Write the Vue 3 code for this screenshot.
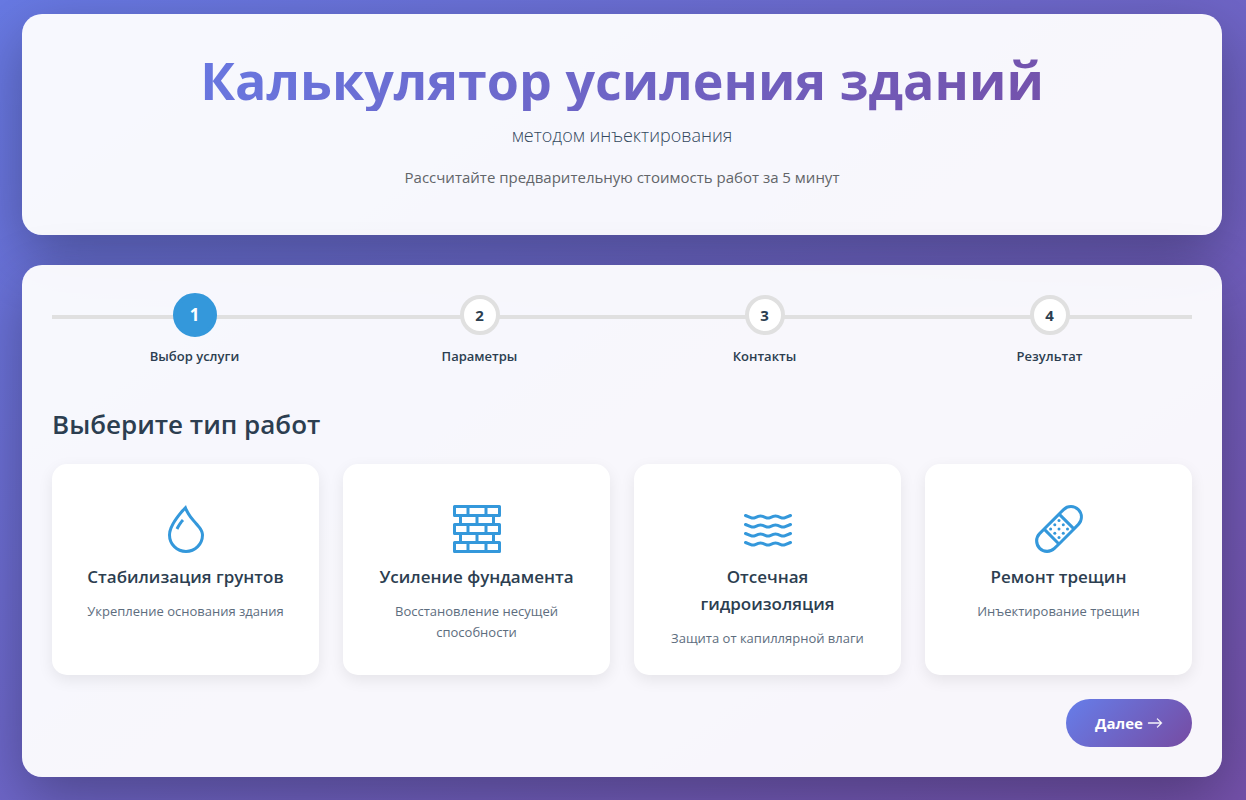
<script setup>
import { ref } from 'vue'

const steps = ['Выбор услуги', 'Параметры', 'Контакты', 'Результат']
const current = ref(0)

const wave =
  'a.5.5 0 0 1 .65-.278l1.757.703a1.5 1.5 0 0 0 1.114 0l1.014-.406a2.5 2.5 0 0 1 1.857 0l1.015.406a1.5 1.5 0 0 0 1.114 0l1.014-.406a2.5 2.5 0 0 1 1.857 0l1.015.406a1.5 1.5 0 0 0 1.114 0l1.757-.703a.5.5 0 1 1 .372.928l-1.758.703a2.5 2.5 0 0 1-1.857 0l-1.014-.406a1.5 1.5 0 0 0-1.114 0l-1.015.406a2.5 2.5 0 0 1-1.857 0l-1.014-.406a1.5 1.5 0 0 0-1.114 0l-1.015.406a2.5 2.5 0 0 1-1.857 0l-1.757-.703a.5.5 0 0 1-.278-.65z'

const services = [
  {
    title: 'Стабилизация грунтов',
    text: 'Укрепление основания здания',
    paths: [
      'M7.21.8C7.69.295 8 0 8 0q.164.544.371 1.038c.812 1.946 2.073 3.35 3.197 4.6C12.878 7.096 14 8.345 14 10a6 6 0 0 1-12 0C2 6.668 5.58 2.517 7.21.8m.413 1.021A31 31 0 0 0 5.794 3.99c-.726.95-1.436 2.008-1.96 3.07C3.304 8.133 3 9.138 3 10a5 5 0 0 0 10 0c0-1.201-.796-2.157-2.181-3.7l-.03-.032C9.75 5.11 8.5 3.72 7.623 1.82z',
      'M4.553 7.776c.82-1.641 1.717-2.753 2.093-3.13l.708.708c-.29.29-1.128 1.311-1.907 2.87z'
    ],
    dots: []
  },
  {
    title: 'Усиление фундамента',
    text: 'Восстановление несущей способности',
    paths: [
      'M0 .5A.5.5 0 0 1 .5 0h15a.5.5 0 0 1 .5.5v3a.5.5 0 0 1-.5.5H14v2h1.5a.5.5 0 0 1 .5.5v3a.5.5 0 0 1-.5.5H14v2h1.5a.5.5 0 0 1 .5.5v3a.5.5 0 0 1-.5.5H.5a.5.5 0 0 1-.5-.5v-3a.5.5 0 0 1 .5-.5H2v-2H.5a.5.5 0 0 1-.5-.5v-3A.5.5 0 0 1 .5 6H2V4H.5a.5.5 0 0 1-.5-.5zM3 4v2h4.5V4zm5.5 0v2H13V4zM3 10v2h4.5v-2zm5.5 0v2H13v-2zM1 1v2h3.5V1zm4.5 0v2h5V1zm6 0v2H15V1zM1 7v2h3.5V7zm4.5 0v2h5V7zm6 0v2H15V7zM1 13v2h3.5v-2zm4.5 0v2h5v-2zm6 0v2H15v-2z'
    ],
    dots: []
  },
  {
    title: 'Отсечная гидроизоляция',
    text: 'Защита от капиллярной влаги',
    paths: [3.314, 6.314, 9.314, 12.314].map((y) => `M.036 ${y}${wave}`),
    dots: []
  },
  {
    title: 'Ремонт трещин',
    text: 'Инъектирование трещин',
    paths: [
      'M14.121 1.879a3 3 0 0 0-4.242 0L8.733 3.026l4.261 4.26 1.127-1.165a3 3 0 0 0 0-4.242M12.293 8 8.027 3.734 3.738 8.031 8 12.293zm-5.006 4.994L3.03 8.737 1.879 9.88a3 3 0 0 0 4.241 4.24l.006-.006zM2.679 7.676l6.492-6.504a4 4 0 0 1 5.66 5.653l-1.477 1.529-5.006 5.006-1.523 1.472a4 4 0 0 1-5.653-5.66l.001-.002 1.505-1.492z'
    ],
    dots: [
      [8, 5.17], [6.6, 6.59], [9.43, 6.59],
      [5.2, 8], [8, 8], [10.83, 8],
      [6.6, 9.42], [9.43, 9.42], [8, 10.83]
    ]
  }
]

function next() {
  if (current.value < steps.length - 1) current.value++
}
</script>

<template>
  <div class="page">
    <header class="panel hero">
      <h1>Калькулятор усиления зданий</h1>
      <p class="subtitle">методом инъектирования</p>
      <p class="lead">Рассчитайте предварительную стоимость работ за 5 минут</p>
    </header>

    <main class="panel calc">
      <ol class="steps">
        <li v-for="(step, i) in steps" :key="step" :class="{ active: i === current }">
          <span class="marker"><span class="circle">{{ i + 1 }}</span></span>
          <span class="label">{{ step }}</span>
        </li>
      </ol>

      <h2>Выберите тип работ</h2>

      <div class="cards">
        <button v-for="s in services" :key="s.title" type="button" class="card">
          <svg viewBox="0 0 16 16" fill="currentColor" fill-rule="evenodd" aria-hidden="true">
            <path v-for="d in s.paths" :key="d" :d="d" />
            <circle v-for="(c, i) in s.dots" :key="i" :cx="c[0]" :cy="c[1]" r=".5" />
          </svg>
          <span class="card-title">{{ s.title }}</span>
          <span class="card-text">{{ s.text }}</span>
        </button>
      </div>

      <div class="actions">
        <button type="button" class="next" @click="next">
          Далее
          <svg viewBox="0 0 16 16" fill="currentColor" stroke="currentColor" stroke-width=".4" aria-hidden="true">
            <path fill-rule="evenodd" d="M1 8a.5.5 0 0 1 .5-.5h11.793l-3.147-3.146a.5.5 0 0 1 .708-.708l4 4a.5.5 0 0 1 0 .708l-4 4a.5.5 0 0 1-.708-.708L13.293 8.5H1.5A.5.5 0 0 1 1 8" />
          </svg>
        </button>
      </div>
    </main>
  </div>
</template>

<style>
body {
  margin: 0;
}
</style>

<style scoped>
.page {
  box-sizing: border-box;
  min-height: 100vh;
  padding: 14px 24px 22px 22px;
  display: flex;
  flex-direction: column;
  gap: 30px;
  background: linear-gradient(145deg, #667eea -12%, #764ba2 115%);
  color: #2c3e50;
  font-family: "Segoe UI", "Open Sans", "Noto Sans", sans-serif;
  font-size: 16px;
  line-height: 24px;
}

.panel {
  border-radius: 20px;
  background: rgba(255, 255, 255, 0.95);
  box-shadow: 0 20px 60px rgba(0, 0, 0, 0.3);
}

.hero {
  padding: 34px 30px 45px;
  text-align: center;
}

h1 {
  margin: 0;
  font-size: 52px;
  line-height: 63px;
  font-weight: 700;
  background: linear-gradient(135deg, #667eea 0%, #764ba2 100%);
  -webkit-background-clip: text;
  background-clip: text;
  color: transparent;
}

.subtitle {
  margin: 10px 0 0;
  font-size: 18px;
  line-height: 28px;
  font-weight: 300;
  color: #34495e;
}

.lead {
  margin: 16px 0 0;
  font-size: 15px;
  line-height: 25px;
  color: #626569;
}

.calc {
  padding: 28px 30px 30px;
}

.steps {
  margin: 0;
  padding: 0;
  list-style: none;
  display: grid;
  grid-template-columns: repeat(4, 1fr);
}

.steps li {
  display: flex;
  flex-direction: column;
  align-items: center;
}

.marker {
  width: 100%;
  height: 44px;
  display: flex;
  align-items: center;
  justify-content: center;
  background: linear-gradient(#e0e0e0, #e0e0e0) 0 22px / 100% 4px no-repeat;
}

.circle {
  box-sizing: border-box;
  width: 40px;
  height: 40px;
  border: 4px solid #e0e0e0;
  border-radius: 50%;
  background: #fff;
  display: flex;
  align-items: center;
  justify-content: center;
  font-size: 15px;
  font-weight: 700;
}

.active .circle {
  width: 44px;
  height: 44px;
  border-color: #3498db;
  background: #3498db;
  color: #fff;
  font-size: 17px;
}

.label {
  margin-top: 8px;
  font-size: 13px;
  line-height: 22px;
  font-weight: 600;
}

h2 {
  margin: 40px 0 0;
  font-size: 26px;
  line-height: 34px;
  font-weight: 600;
}

.cards {
  margin-top: 23px;
  display: grid;
  grid-template-columns: repeat(4, 1fr);
  gap: 24px;
}

.card {
  padding: 41px 30px 26px;
  border: 0;
  border-radius: 15px;
  background: #fff;
  box-shadow: 0 5px 15px rgba(0, 0, 0, 0.08);
  color: inherit;
  font: inherit;
  display: flex;
  flex-direction: column;
  align-items: center;
  text-align: center;
  cursor: pointer;
}

.card svg {
  width: 48px;
  height: 48px;
  color: #3498db;
}

.card-title {
  margin-top: 10px;
  font-size: 17px;
  line-height: 27px;
  font-weight: 600;
}

.card-text {
  margin-top: 11px;
  font-size: 13px;
  line-height: 21px;
  color: #5d6d7e;
}

.actions {
  margin-top: 24px;
  display: flex;
  justify-content: flex-end;
}

.next {
  height: 48px;
  padding: 0 29px;
  border: 0;
  border-radius: 24px;
  background: linear-gradient(135deg, #667eea 0%, #764ba2 100%);
  color: #fff;
  font: inherit;
  font-size: 15px;
  font-weight: 700;
  display: flex;
  align-items: center;
  gap: 4px;
  cursor: pointer;
}

.next svg {
  width: 16px;
  height: 16px;
}
</style>
